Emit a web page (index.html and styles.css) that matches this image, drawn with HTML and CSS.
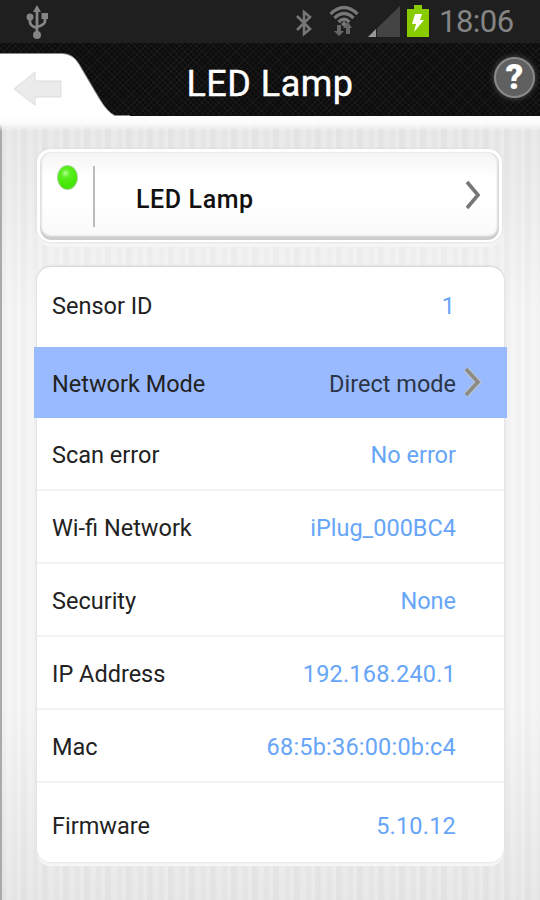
FILE: index.html
```
<!DOCTYPE html>
<html lang="en">

<head>
  <meta charset="UTF-8">
  <title>LED Lamp</title>
  <link rel="stylesheet" href="styles.css">
</head>

<body>
  <!-- Status bar -->
  <div class="status-bar">
    <svg class="usb" width="24" height="36" viewBox="0 0 24 36">
      <g fill="none" stroke="#858585" stroke-width="2.8">
        <path d="M12 6V30M5 14V18Q5 22 12 24M20 12V17Q20 21 12 23" />
      </g>
      <path fill="#858585" d="M12 1L16 8H8ZM16.500 9H23V15H16.500Z" />
      <circle cx="5" cy="13" r="3.5" fill="#858585" />
      <circle cx="12" cy="31" r="4" fill="#858585" />
    </svg>
    <div class="status-icons">
      <svg class="bluetooth" width="18" height="30" viewBox="0 0 18 30">
        <path fill="none" stroke="#777" stroke-width="2.6" d="M2 8L15 21L9 26V4L15 9L2 22" />
      </svg>
      <svg class="wifi" width="30" height="32" viewBox="0 0 30 32">
        <g fill="none" stroke="#777" stroke-width="3.2">
          <path d="M1.500 9Q15 -4 28.500 9M5.500 13Q15 4 24.500 13M9.500 17Q15 11.500 20.500 17" />
        </g>
        <path fill="#777" d="M12 19L15 16L18 19L15 22Z" />
        <path fill="#666" d="M8 20H12V26H15L10 31L5 26H8ZM17 29V23H14L19 17L23 23H21V29Z" />
      </svg>
      <svg class="signal" width="32" height="31" viewBox="0 0 32 31">
        <path fill="#444" d="M32 0V31H0Z" />
        <path fill="#999" d="M8 23V31H0Z" />
        <path stroke="#222" d="M8.500 22V31" />
      </svg>
      <svg class="battery" width="22" height="32" viewBox="0 0 22 32">
        <path fill="#8c0" d="M7 0H15V4H22V32H0V4H7Z" />
        <path fill="#fff" d="M8 9H15L13 15H17L7 27L9 19H5Z" />
      </svg>
      <span class="clock">18:06</span>
    </div>
  </div>

  <!-- Title bar -->
  <header class="header">
    <svg class="back-tab" width="130" height="73" viewBox="0 0 130 73">
      <path fill="#fff" stroke="#888" d="M-2 10.500H62Q73 10.500 79 21L99 55Q108 70 115 72.500H132V86H-2Z" />
      <path class="back-arrow" d="M14 46L35 29V38H61V54H35V62Z" />
    </svg>
    <h1 class="title">LED Lamp</h1>
    <button class="help-button">?</button>
  </header>

  <main class="content">
    <div class="device">
      <span class="led"></span>
      <span class="separator"></span>
      <span class="device-name">LED Lamp</span>
      <svg class="device-chevron" width="18" height="32" viewBox="0 0 18 32">
        <path fill="none" stroke="#777" stroke-width="3.600" d="M3 3L14 16L3 29" />
      </svg>
    </div>

    <div class="settings">
      <div class="row first">
        <span class="label">Sensor ID</span>
        <span class="value">1</span>
      </div>
      <div class="row selected">
        <span class="label">Network Mode</span>
        <span class="value">Direct mode</span>
        <svg class="row-chevron" width="20" height="32" viewBox="0 0 20 32">
          <path fill="none" stroke="#b9c4cc" stroke-width="6" d="M4 3L16 16L4 29" />
          <path fill="none" stroke="#8b8b87" stroke-width="3.600" d="M4 3L16 16L4 29" />
        </svg>
      </div>
      <div class="row">
        <span class="label">Scan error</span>
        <span class="value">No error</span>
      </div>
      <div class="row">
        <span class="label">Wi-fi Network</span>
        <span class="value">iPlug_000BC4</span>
      </div>
      <div class="row">
        <span class="label">Security</span>
        <span class="value">None</span>
      </div>
      <div class="row">
        <span class="label">IP Address</span>
        <span class="value number">192.168.240.1</span>
      </div>
      <div class="row">
        <span class="label">Mac</span>
        <span class="value number">68:5b:36:00:0b:c4</span>
      </div>
      <div class="row last">
        <span class="label">Firmware</span>
        <span class="value number">5.10.12</span>
      </div>
    </div>
  </main>
</body>

</html>
```
FILE: styles.css
```
* {
  box-sizing: border-box;
}

body {
  margin: 0;
  height: 900px;
  overflow: hidden;
  display: flex;
  flex-direction: column;
  font-family: Roboto, sans-serif;
}

.status-bar {
  height: 43px;
  flex: none;
  display: flex;
  justify-content: space-between;
  align-items: flex-start;
  padding: 0 26px 0 25px;
  background-color: #1f1f1f;
}

.usb {
  margin-top: 4px;
}

.status-icons {
  display: flex;
  align-items: flex-start;
}

.bluetooth {
  margin: 8px 16px 0 0;
}

.wifi {
  margin: 5px 9px 0 0;
}

.signal {
  margin: 6px 7px 0 0;
}

.battery {
  margin: 5px 10px 0 0;
}

.clock {
  width: 75px;
  font-size: 31px;
  line-height: 43px;
  letter-spacing: -0.5px;
  white-space: nowrap;
  color: #858585;
}

.header {
  position: relative;
  height: 73px;
  flex: none;
  display: flex;
  align-items: center;
  justify-content: center;
  background-color: #0d0d0d;
  background-image:
    repeating-linear-gradient(45deg, rgba(255, 255, 255, 0.04) 0 1px, transparent 1px 4px),
    repeating-linear-gradient(-45deg, rgba(255, 255, 255, 0.04) 0 1px, transparent 1px 4px);
}

.back-tab {
  position: absolute;
  left: 0;
  top: 0;
}

.back-arrow {
  fill: #ebebeb;
  stroke: #dcdcdc;
}

.title {
  margin: 9px 0 0;
  font-size: 36px;
  line-height: 42px;
  font-weight: 400;
  letter-spacing: 0.5px;
  color: #fff;
  -webkit-text-stroke: 0.4px #fff;
}

.help-button {
  position: absolute;
  top: 14px;
  right: 5px;
  width: 41px;
  height: 41px;
  padding: 0;
  border: 2px solid #8a8a8a;
  border-radius: 50%;
  background-color: #606060;
  box-shadow: 0 0 6px #555;
  color: #fff;
  font: 900 35px/36px Roboto, sans-serif;
}

.content {
  flex: 1;
  padding: 33px 34px 0 37px;
  background-color: #eee;
  background-image:
    linear-gradient(#fff 0, #fafafa 8px, rgba(255, 255, 255, 0) 15px),
    linear-gradient(90deg, #aaa 2px, transparent 2px),
    linear-gradient(rgba(0, 0, 0, 0.03), rgba(255, 255, 255, 0.35) 25%, rgba(255, 255, 255, 0.35) 75%, rgba(0, 0, 0, 0.03)),
    repeating-linear-gradient(90deg, #e9e9e9 0 5px, #f0f0f0 7px 11px, #ebebeb 13px 16px, #f1f1f1 18px 21px);
}

.device {
  display: flex;
  width: 465px;
  height: 93px;
  border: 3px solid #fff;
  border-bottom-width: 2px;
  border-radius: 14px;
  background: linear-gradient(#f5f5f5, #fff 30%, #fff 60%, #f8f8f8);
  box-shadow: 0 0 3px 0 #d5d5d5, 0 5px 1px #f5f5f5, inset 0 -4px 2px #ccc, inset -2px 0 2px #ddd, inset 2px 0 2px #e5e5e5;
}

.led {
  width: 21px;
  height: 25px;
  margin: 13px 0 0 17px;
  border: 1px solid #a6d59a;
  border-radius: 50%;
  background: radial-gradient(circle at 40% 32%, #b5ff91 0, #5bef20 22%, #43e600 65%, #5bd82e 100%);
}

.separator {
  width: 2px;
  height: 61px;
  margin: 14px 0 0 15px;
  background-color: #bbb;
}

.device-name {
  margin: 31px 0 0 41px;
  font-size: 25px;
  line-height: 34px;
  font-weight: 500;
  letter-spacing: 0.6px;
  color: #111;
}

.device-chevron {
  margin: 27px 17px 0 auto;
}

.settings {
  width: 467px;
  height: 595px;
  margin: 25px 0 0;
  border-radius: 14px;
  background-color: #fff;
  box-shadow: 0 -1px 2px #d5d5d5, 0 0 2px 1px #e8e8e8, 0 4px 0 #f7f7f7;
}

.row {
  display: flex;
  justify-content: space-between;
  align-items: center;
  height: 73px;
  padding: 3px 48px 0 15px;
  border-bottom: 2px solid #f2f2f2;
  font-size: 23.5px;
  line-height: 30px;
}

.row.first {
  height: 80px;
  padding: 0 49px 2px 15px;
  border-bottom: none;
}

.row.selected {
  position: relative;
  height: 71px;
  margin: 0 -3px;
  padding: 3px 51px 0 18px;
  border-bottom: none;
  background-color: #9abaff;
}

.row.last {
  height: 78px;
  padding-top: 8px;
  border-bottom: none;
}

.label {
  color: #222;
}

.value {
  color: #66a5f8;
}

.value.number {
  letter-spacing: 0.2px;
}

.row.selected .value {
  color: #2a3548;
}

.row-chevron {
  position: absolute;
  right: 25px;
  top: 19px;
}
```
